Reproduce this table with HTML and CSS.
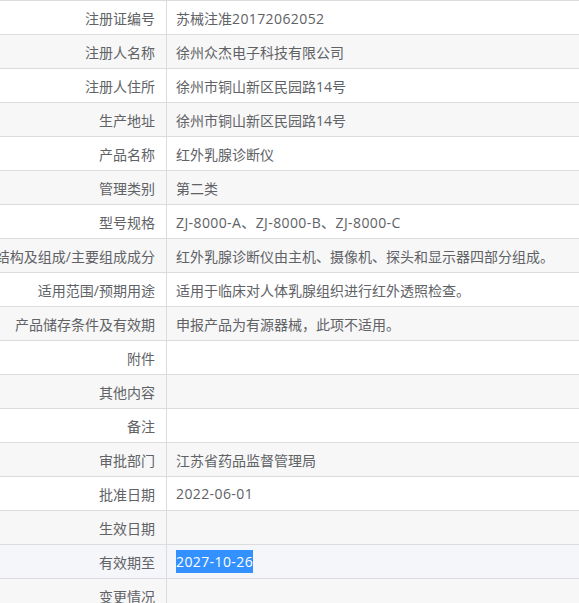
FILE: index.html
```html
<!DOCTYPE html>
<html lang="zh-CN">
<head>
<meta charset="utf-8">
<title>注册证信息</title>
<link rel="stylesheet" href="styles.css">
</head>
<body>
<div class="table">
  <div class="row"><div class="label"><span>注册证编号</span></div><div class="value"><span>苏械注准<span class="num">20172062052</span></span></div></div>
  <div class="row"><div class="label"><span>注册人名称</span></div><div class="value">徐州众杰电子科技有限公司</div></div>
  <div class="row"><div class="label"><span>注册人住所</span></div><div class="value">徐州市铜山新区民园路14号</div></div>
  <div class="row"><div class="label"><span>生产地址</span></div><div class="value">徐州市铜山新区民园路14号</div></div>
  <div class="row"><div class="label"><span>产品名称</span></div><div class="value">红外乳腺诊断仪</div></div>
  <div class="row"><div class="label"><span>管理类别</span></div><div class="value">第二类</div></div>
  <div class="row"><div class="label"><span>型号规格</span></div><div class="value"><span class="num">ZJ-8000-A、ZJ-8000-B、ZJ-8000-C</span></div></div>
  <div class="row"><div class="label"><span>结构及组成/主要组成成分</span></div><div class="value">红外乳腺诊断仪由主机、摄像机、探头和显示器四部分组成。</div></div>
  <div class="row"><div class="label"><span>适用范围/预期用途</span></div><div class="value">适用于临床对人体乳腺组织进行红外透照检查。</div></div>
  <div class="row"><div class="label"><span>产品储存条件及有效期</span></div><div class="value">申报产品为有源器械，此项不适用。</div></div>
  <div class="row"><div class="label"><span>附件</span></div><div class="value"></div></div>
  <div class="row"><div class="label"><span>其他内容</span></div><div class="value"></div></div>
  <div class="row"><div class="label"><span>备注</span></div><div class="value"></div></div>
  <div class="row"><div class="label"><span>审批部门</span></div><div class="value">江苏省药品监督管理局</div></div>
  <div class="row"><div class="label"><span>批准日期</span></div><div class="value"><span class="num">2022-06-01</span></div></div>
  <div class="row"><div class="label"><span>生效日期</span></div><div class="value"></div></div>
  <div class="row hover"><div class="label"><span>有效期至</span></div><div class="value"><span class="num sel">2027-10-26</span></div></div>
  <div class="row"><div class="label"><span>变更情况</span></div><div class="value"></div></div>
</div>
</body>
</html>
```

FILE: styles.css
```css
html, body {
  margin: 0;
  padding: 0;
  background: #ffffff;
  overflow: hidden;
}
body {
  font-family: "Open Sans", "Noto Sans CJK SC", sans-serif;
  font-size: 14px;
  color: #606266;
}
.table {
  display: flex;
  flex-direction: column;
  width: 100%;
}
.row {
  display: grid;
  grid-template-columns: 167px 1fr;
  border-top: 1px solid #dcdcdc;
  background: #ffffff;
}
.row:nth-child(even) {
  background: #f7f7f7;
}
.row.hover {
  background: #f4f6fa;
}
.label {
  display: flex;
  justify-content: flex-end;
  align-items: center;
  height: 33px;
  padding-right: 11px;
  border-right: 1px solid #dcdcdc;
  overflow: hidden;
  white-space: nowrap;
}
.value {
  display: flex;
  align-items: center;
  height: 33px;
  padding-left: 9px;
  white-space: nowrap;
}
.num {
  letter-spacing: 0.4px;
}
.sel {
  display: inline-block;
  background: #3390ff;
  color: #ffffff;
  line-height: 23px;
}
```
